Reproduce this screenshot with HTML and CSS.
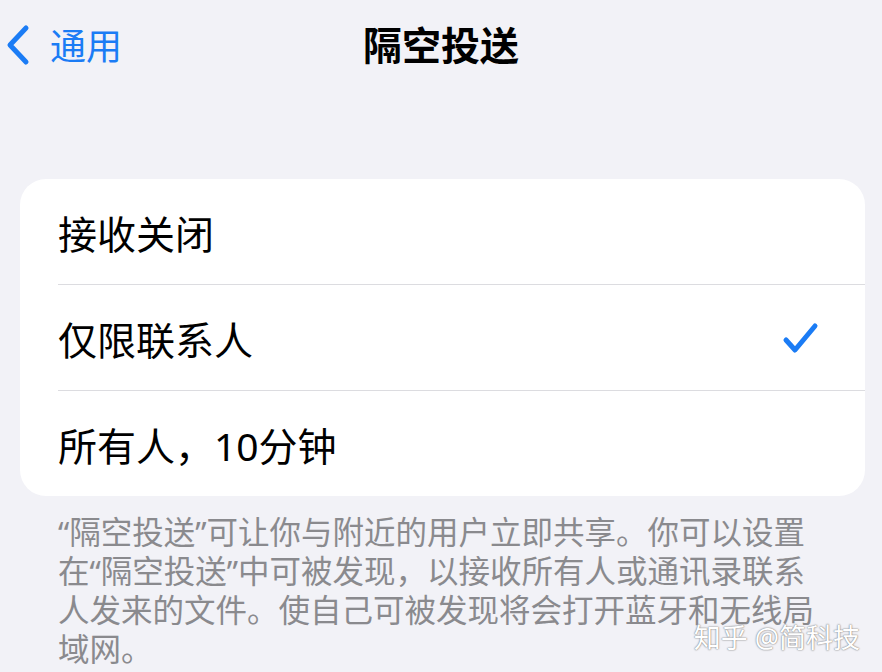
FILE: index.html
```html
<!DOCTYPE html>
<html lang="zh-CN">
<head>
<meta charset="UTF-8">
<meta name="viewport" content="width=device-width, initial-scale=1.0">
<title>隔空投送</title>
<link rel="stylesheet" href="styles.css">
</head>
<body>
    <div class="nav">
        <a class="back" href="#">
            <svg class="chevron" width="28" height="42" viewBox="0 0 28 42">
                <path d="M22 4 L6 21 L22 38" fill="none" stroke="#1b7cf5" stroke-width="5" stroke-linecap="round" stroke-linejoin="round"/>
            </svg>
            <span>通用</span>
        </a>
        <div class="title">隔空投送</div>
    </div>

    <div class="group">
        <div class="row"><span>接收关闭</span></div>
        <div class="row"><span>仅限联系人</span>
            <svg class="check" width="40" height="36" viewBox="0 0 40 36">
                <path d="M5 20 L14 30 L34 6" fill="none" stroke="#1b7cf5" stroke-width="5" stroke-linecap="round" stroke-linejoin="round"/>
            </svg>
        </div>
        <div class="row"><span>所有人，10分钟</span></div>
    </div>

    <p class="note">“隔空投送”可让你与附近的用户立即共享。你可以设置在“隔空投送”中可被发现，以接收所有人或通讯录联系人发来的文件。使自己可被发现将会打开蓝牙和无线局域网。</p>

    <div class="watermark">知乎 @简科技</div>
</body>
</html>
```

FILE: styles.css
```css
body {
    margin: 0;
    background-color: #f2f2f7;
    font-family: "Noto Sans", "Noto Sans CJK SC", sans-serif;
    color: #000;
    position: relative;
    height: 672px;
    overflow: hidden;
}

.nav {
    height: 90px;
    position: relative;
    display: flex;
    align-items: center;
    justify-content: center;
}
.back {
    position: absolute;
    left: 4px;
    top: 18px;
    display: flex;
    align-items: center;
    gap: 18px;
    color: #1b7cf5;
    text-decoration: none;
    font-size: 36px;
}
.chevron {
    display: block;
}
.title {
    font-size: 39px;
    font-weight: 700;
    margin-top: -4px;
}

.group {
    background-color: #fff;
    border-radius: 26px;
    margin: 89px 17px 0 20px;
    padding-left: 38px;
}
.row {
    height: 105px;
    display: flex;
    align-items: center;
    justify-content: space-between;
    padding-right: 44px;
    font-size: 39px;
    border-bottom: 1px solid #dcdce0;
}
.row:last-child {
    border-bottom: none;
}
.check {
    display: block;
}

.note {
    margin: 16px 0 0 0;
    padding: 0 60px 0 58px;
    font-size: 31.5px;
    line-height: 39px;
    color: #8a8a8e;
}

.watermark {
    position: absolute;
    right: 22px;
    bottom: 16px;
    font-size: 27px;
    color: #fff;
    text-shadow: 0 0 2px #888, 0 0 1px #777;
}
```
